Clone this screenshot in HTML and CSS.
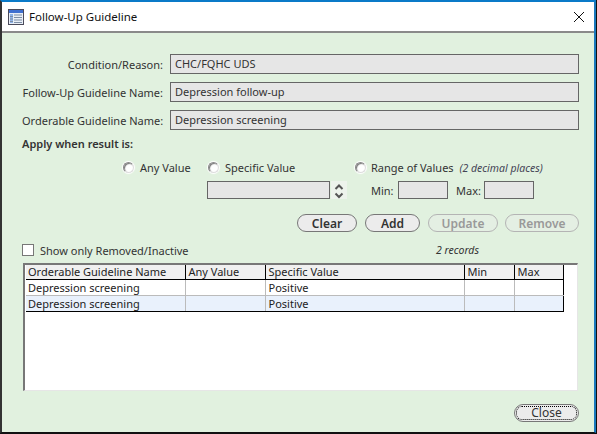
FILE: index.html
```html
<!DOCTYPE html>
<html lang="en">
<head>
<meta charset="utf-8">
<title>Follow-Up Guideline</title>
<link rel="stylesheet" href="styles.css">
</head>
<body>
<div class="window">
  <header class="titlebar">
    <svg class="app-icon" width="16" height="16" viewBox="0 0 16 16">
      <rect x="0.5" y="0.5" width="15" height="15" fill="#e8eef6" stroke="#4a4a5a"/>
      <rect x="1" y="1" width="14" height="3" fill="#3f6fd0"/>
      <rect x="2" y="5" width="3" height="9" fill="#8fb4ea"/>
      <path d="M6 6h8M6 8.500h8M6 11h8M6 13.500h8M2 7.500h3M2 10h3M2 12.500h3" stroke="#7c8da5" stroke-width="1" fill="none"/>
    </svg>
    <span class="title">Follow-Up Guideline</span>
    <svg class="close-x" width="12" height="12" viewBox="0 0 12 12">
      <path d="M1 1l10 10M11 1L1 11" stroke="#111" stroke-width="1" fill="none"/>
    </svg>
  </header>
  <main class="content">
    <div class="fields">
      <label class="field-label">Condition/Reason:</label><div class="field">CHC/FQHC UDS</div>
      <label class="field-label">Follow-Up Guideline Name:</label><div class="field">Depression follow-up</div>
      <label class="field-label">Orderable Guideline Name:</label><div class="field">Depression screening</div>
    </div>
    <div class="apply">Apply when result is:</div>
    <div class="options">
      <div class="opt opt-any"><span class="radio"></span><span>Any Value</span></div>
      <div class="opt opt-specific"><span class="radio"></span><span>Specific Value</span></div>
      <div class="opt opt-range"><span class="radio"></span><span>Range of Values <em class="note">(2 decimal places)</em></span></div>
    </div>
    <div class="values">
      <div class="box box-select"></div>
      <svg class="spinner" width="16" height="18" viewBox="0 0 16 18">
        <rect width="16" height="18" fill="#edf3ec"/>
        <path d="M4.500 8L8 4.500 11.500 8M4.500 12.500L8 16l3.500-3.500" stroke="#555" stroke-width="2" fill="none"/>
      </svg>
      <span class="min-label">Min:</span><div class="box box-num"></div>
      <span class="max-label">Max:</span><div class="box box-num"></div>
    </div>
    <div class="actions">
      <button class="btn btn-clear">Clear</button>
      <button class="btn btn-add">Add</button>
      <button class="btn btn-update" disabled>Update</button>
      <button class="btn btn-remove" disabled>Remove</button>
    </div>
    <div class="filter">
      <span class="check"></span><span class="check-label">Show only Removed/Inactive</span>
      <em class="records">2 records</em>
    </div>
    <div class="table-box">
      <table>
        <colgroup><col class="c1"><col class="c2"><col class="c3"><col class="c4"><col class="c5"></colgroup>
        <thead><tr><th>Orderable Guideline Name</th><th>Any Value</th><th>Specific Value</th><th>Min</th><th>Max</th></tr></thead>
        <tbody>
          <tr><td>Depression screening</td><td></td><td>Positive</td><td></td><td></td></tr>
          <tr class="alt"><td>Depression screening</td><td></td><td>Positive</td><td></td><td></td></tr>
        </tbody>
      </table>
    </div>
    <div class="footer"><button class="btn btn-close"><span class="focus">Close</span></button></div>
  </main>
</div>
</body>
</html>
```
FILE: styles.css
```css
* { box-sizing: border-box; }
html, body { margin: 0; padding: 0; background: #111; }
body { width: 597px; height: 434px; font-family: "Noto Sans", sans-serif; font-size: 11px; color: #333; }
.window { width: 596px; height: 433px; display: flex; flex-direction: column; background: #e1f1df; border-top: 2px solid #0a7ac8; border-right: 2px solid #1a78bd; border-left: 2px solid #333; border-bottom: 1px solid #111; }
.titlebar { height: 31px; flex: none; display: flex; align-items: center; padding: 0 0 0 6px; background: #fff; border-bottom: 2px solid #8a8a8a; }
.app-icon { flex: none; }
.title { margin-left: 5px; font-size: 11.500px; color: #111; }
.close-x { margin-left: auto; margin-right: 9px; }
.content { flex: 1; padding: 21px 15px 0 20px; display: flex; flex-direction: column; }
.fields { display: grid; grid-template-columns: 141px 409px; grid-auto-rows: 20px; column-gap: 7px; row-gap: 8px; }
.field-label { text-align: right; line-height: 22px; white-space: nowrap; }
.field { height: 20px; padding: 0 4px; line-height: 17px; background: #e6e6e6; border: 1px solid #666; color: #333; }
.apply { margin-top: 7px; font-weight: 600; line-height: 14px; }
.options { margin-top: 9px; display: flex; height: 14px; align-items: center; padding-left: 101px; }
.opt { display: flex; align-items: center; gap: 6px; white-space: nowrap; }
.opt-any { width: 85px; }
.opt-specific { width: 147px; }
.opt-range { gap: 5px; }
.radio { width: 11px; height: 11px; border-radius: 50%; background: #fff; border: 1px solid #888; border-bottom-color: #ddd; border-right-color: #ddd; box-shadow: inset 1px 1px 1px #777, 0 0 1px 1px #fff; }
.note { font-size: 10.500px; color: #445; margin-left: 3px; }
.values { margin-top: 7px; display: flex; align-items: center; height: 18px; padding-left: 185px; }
.box { height: 18px; background: #e6e6e6; border: 1px solid #666; }
.box-select { width: 123px; }
.spinner { margin-left: 1px; flex: none; }
.min-label { margin-left: 24px; width: 27px; }
.max-label { margin-left: 8px; width: 28px; }
.box-num { width: 50px; }
.actions { margin-top: 15px; display: flex; height: 18px; padding-left: 275px; }
.btn { height: 18px; padding: 0; font: 600 12px "Noto Sans", sans-serif; color: #333; background: #ececec; border: 1px solid #777; border-radius: 9px; }
.btn:disabled { color: #999; border-color: #b4b4b4; background: #e4efe3; }
.btn-clear { width: 60px; }
.btn-add { width: 55px; margin-left: 8px; }
.btn-update { width: 70px; margin-left: 8px; }
.btn-remove { width: 74px; margin-left: 7px; }
.filter { margin-top: 12px; display: flex; align-items: center; height: 12px; }
.check { width: 12px; height: 12px; background: #fff; border: 1px solid #777; flex: none; }
.check-label { margin-left: 6px; width: 396px; white-space: nowrap; }
.records { font-size: 10.500px; white-space: nowrap; }
.table-box { margin-top: 7px; margin-left: 1px; width: 555px; height: 128px; background: #fff; border-top: 2px solid #777; border-left: 2px solid #777; border-right: 1px solid #e6e6e6; border-bottom: 1px solid #e6e6e6; padding: 0 0 0 1px; }
table { border-collapse: collapse; table-layout: fixed; width: 537px; border-bottom: 1px solid #000; border-right: 1px solid #000; color: #222; }
.c1 { width: 159px; } .c2 { width: 80px; } .c3 { width: 199px; } .c4 { width: 50px; } .c5 { width: 49px; }
th { height: 14px; padding: 0 3px; background: #f0f0f0; font-weight: 400; text-align: left; border-right: 1px solid #000; border-bottom: 1px solid #000; white-space: nowrap; line-height: 13px; }
td { height: 16px; padding: 0 3px; border-right: 1px solid #bbb; border-bottom: 1px solid #bbb; white-space: nowrap; line-height: 15px; }
th:first-child, td:first-child { padding-left: 2px; }
.alt td { background: #e9f1fc; border-bottom-color: #000; }
td:last-child { border-right-color: #000; }
.footer { margin-top: 13px; display: flex; justify-content: flex-end; }
.btn-close { width: 65px; font-weight: 400; font-size: 12px; padding: 1px; }
.focus { display: block; height: 14px; line-height: 12px; border: 1px dotted #000; border-radius: 6px; }
```
